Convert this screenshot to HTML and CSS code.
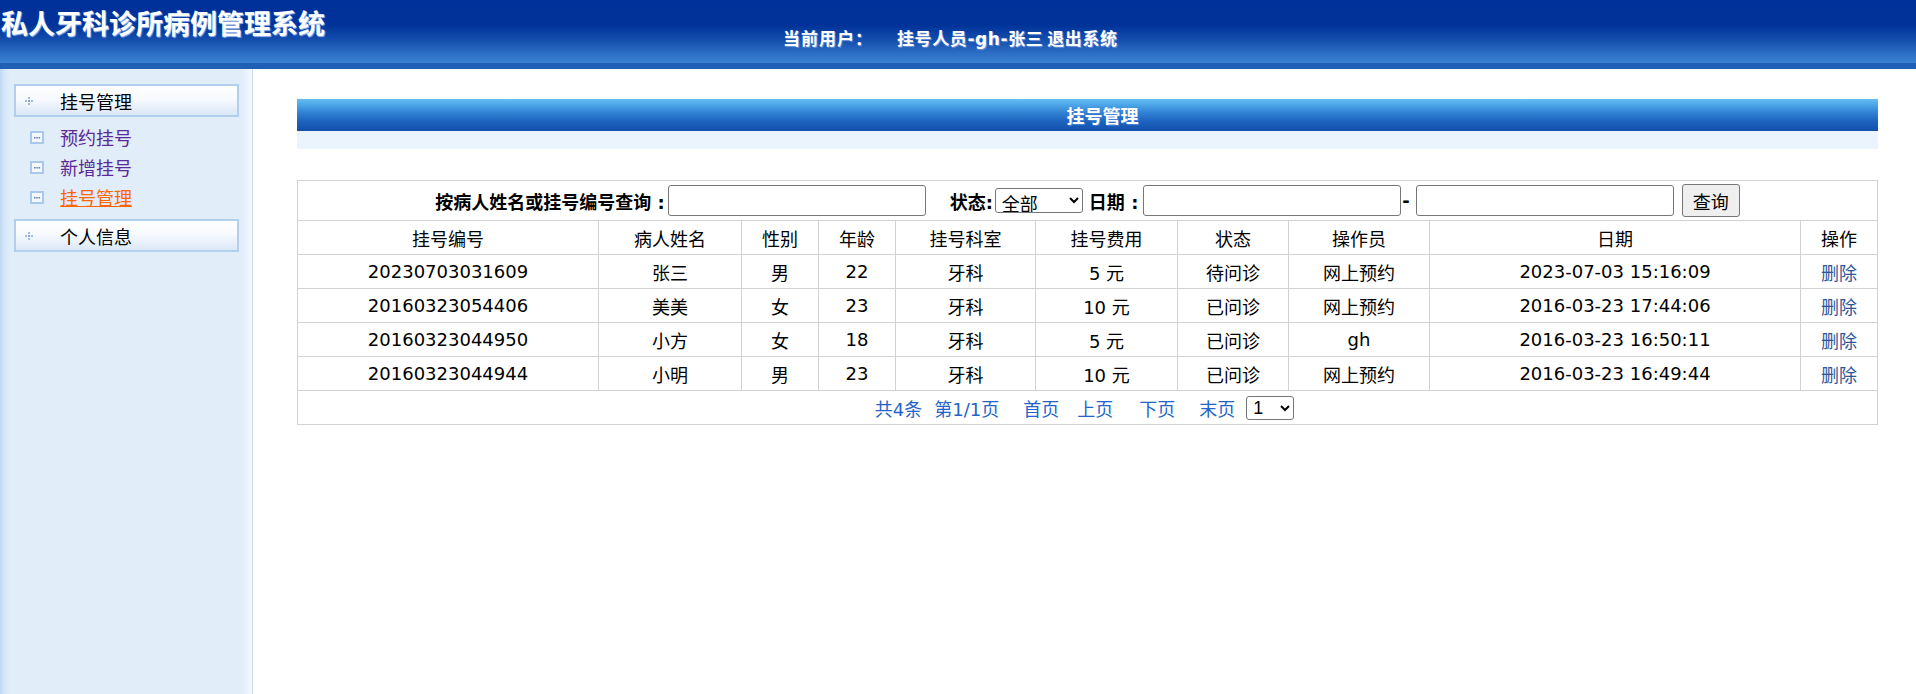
FILE: index.html
```html
<!DOCTYPE html>
<html lang="zh-CN">
<head>
<meta charset="utf-8">
<title>私人牙科诊所病例管理系统</title>
<link rel="stylesheet" href="styles.css">
</head>
<body>
<div class="header">
  <div class="header-main">
    <h1 class="brand">私人牙科诊所病例管理系统</h1>
    <div class="userinfo"><span class="label">当前用户：</span><span class="user">挂号人员-gh-张三</span> <a class="logout" href="#">退出系统</a></div>
  </div>
  <div class="header-band"></div>
</div>
<div class="layout">
  <aside class="sidebar">
    <div class="menu-head">
      <svg class="plus" width="8" height="8" viewBox="0 0 8 8"><rect x="3" y="0" width="2" height="2" fill="#9dbde6"/><rect x="0" y="3" width="2" height="2" fill="#9dbde6"/><rect x="3" y="3" width="2" height="2" fill="#7ea8dc"/><rect x="6" y="3" width="2" height="2" fill="#9dbde6"/><rect x="3" y="6" width="2" height="2" fill="#9dbde6"/></svg>
      <span>挂号管理</span>
    </div>
    <ul class="submenu">
      <li><svg class="box" width="14" height="13" viewBox="0 0 14 13"><rect x="1" y="1" width="12" height="11" fill="#f4f8fd" stroke="#a9c8ec" stroke-width="2"/><rect x="4" y="6" width="1.5" height="1.5" fill="#5a7fb5"/><rect x="6.3" y="6" width="1.5" height="1.5" fill="#5a7fb5"/><rect x="8.6" y="6" width="1.5" height="1.5" fill="#5a7fb5"/></svg><a class="link visited" href="#">预约挂号</a></li>
      <li><svg class="box" width="14" height="13" viewBox="0 0 14 13"><rect x="1" y="1" width="12" height="11" fill="#f4f8fd" stroke="#a9c8ec" stroke-width="2"/><rect x="4" y="6" width="1.5" height="1.5" fill="#5a7fb5"/><rect x="6.3" y="6" width="1.5" height="1.5" fill="#5a7fb5"/><rect x="8.6" y="6" width="1.5" height="1.5" fill="#5a7fb5"/></svg><a class="link visited" href="#">新增挂号</a></li>
      <li><svg class="box" width="14" height="13" viewBox="0 0 14 13"><rect x="1" y="1" width="12" height="11" fill="#f4f8fd" stroke="#a9c8ec" stroke-width="2"/><rect x="4" y="6" width="1.5" height="1.5" fill="#5a7fb5"/><rect x="6.3" y="6" width="1.5" height="1.5" fill="#5a7fb5"/><rect x="8.6" y="6" width="1.5" height="1.5" fill="#5a7fb5"/></svg><a class="link active" href="#">挂号管理</a></li>
    </ul>
    <div class="menu-head">
      <svg class="plus" width="8" height="8" viewBox="0 0 8 8"><rect x="3" y="0" width="2" height="2" fill="#9dbde6"/><rect x="0" y="3" width="2" height="2" fill="#9dbde6"/><rect x="3" y="3" width="2" height="2" fill="#7ea8dc"/><rect x="6" y="3" width="2" height="2" fill="#9dbde6"/><rect x="3" y="6" width="2" height="2" fill="#9dbde6"/></svg>
      <span>个人信息</span>
    </div>
  </aside>
  <main class="main">
    <div class="panel-title">挂号管理</div>
    <div class="panel-sub"></div>
    <table class="grid">
      <colgroup>
        <col class="c-no"><col class="c-name"><col class="c-sex"><col class="c-age"><col class="c-dept"><col class="c-fee"><col class="c-state"><col class="c-op"><col class="c-date"><col class="c-act">
      </colgroup>
      <thead>
        <tr class="search-row">
          <td colspan="10">
            <form class="search">
              <label class="lbl lbl-key">按病人姓名或挂号编号查询 :</label><input class="txt" type="text"><label class="lbl lbl-state">状态:</label><select class="sel"><option>全部</option><option>待问诊</option><option>已问诊</option></select><label class="lbl lbl-date">日期 :</label><input class="txt" type="text"><span class="dash">-</span><input class="txt" type="text"><button class="btn" type="button">查询</button>
            </form>
          </td>
        </tr>
        <tr class="head-row">
          <th>挂号编号</th>
          <th>病人姓名</th>
          <th>性别</th>
          <th>年龄</th>
          <th>挂号科室</th>
          <th>挂号费用</th>
          <th>状态</th>
          <th>操作员</th>
          <th>日期</th>
          <th>操作</th>
        </tr>
      </thead>
      <tbody>
        <tr><td>20230703031609</td><td>张三</td><td>男</td><td>22</td><td>牙科</td><td>5 元</td><td>待问诊</td><td>网上预约</td><td>2023-07-03 15:16:09</td><td><a class="del" href="#">删除</a></td></tr>
        <tr><td>20160323054406</td><td>美美</td><td>女</td><td>23</td><td>牙科</td><td>10 元</td><td>已问诊</td><td>网上预约</td><td>2016-03-23 17:44:06</td><td><a class="del" href="#">删除</a></td></tr>
        <tr><td>20160323044950</td><td>小方</td><td>女</td><td>18</td><td>牙科</td><td>5 元</td><td>已问诊</td><td>gh</td><td>2016-03-23 16:50:11</td><td><a class="del" href="#">删除</a></td></tr>
        <tr><td>20160323044944</td><td>小明</td><td>男</td><td>23</td><td>牙科</td><td>10 元</td><td>已问诊</td><td>网上预约</td><td>2016-03-23 16:49:44</td><td><a class="del" href="#">删除</a></td></tr>
        <tr class="pager-row">
          <td colspan="10">
            <div class="pager">
              <span class="pg">共4条</span><span class="pg">第1/1页</span><a class="pg pg-first" href="#">首页</a><a class="pg" href="#">上页</a><a class="pg pg-next" href="#">下页</a><a class="pg pg-last" href="#">末页</a><select class="pg-sel"><option>1</option></select>
            </div>
          </td>
        </tr>
      </tbody>
    </table>
  </main>
</div>
</body>
</html>
```
FILE: styles.css
```css
* { box-sizing: border-box; }
html, body { margin: 0; padding: 0; }
body {
  font-family: "DejaVu Sans", "Noto Sans CJK SC", sans-serif;
  font-size: 18px;
  color: #000;
  background: #fff;
}

/* Header */
.header-main {
  height: 63px;
  display: grid;
  grid-template-columns: 783px 1fr;
  background: linear-gradient(to bottom, #00309a 0%, #003399 40%, #1650ae 65%, #2d6ec6 85%, #3a82d2 100%);
}
.brand {
  margin: 0;
  padding: 9px 0 0 1px;
  font-family: "Noto Sans CJK SC", sans-serif;
  font-size: 27px;
  line-height: 28px;
  font-weight: 700;
  color: #fff;
  text-shadow: 1px 1px 1px #9fb9ef;
  white-space: nowrap;
}
.userinfo {
  padding-top: 28px;
  font-family: "Noto Sans CJK SC", sans-serif;
  font-size: 17px;
  line-height: 20px;
  font-weight: 700;
  color: #fff;
  white-space: nowrap;
  text-shadow: 1px 1px 1px #6f93d6;
}
.userinfo .label { letter-spacing: 1px; }
.userinfo .user {
  margin-left: 24px;
  font-family: "DejaVu Sans", "Noto Sans CJK SC", sans-serif;
  letter-spacing: 0.6px;
}
.logout { color: #fff; text-decoration: none; letter-spacing: 0.6px; }
.header-band {
  height: 6px;
  background: #1f5fb6;
}

/* Layout */
.layout {
  display: flex;
  min-height: calc(100vh - 69px);
}
.sidebar {
  flex: 0 0 253px;
  background: linear-gradient(to right, #c0d8f2 0px, #d6e6f8 5px, #e1edf9 10px, #e1edf9 242px, #f4f8fd 252px);
  border-right: 1px solid #c6dbf1;
  padding-top: 15px;
}
.menu-head {
  margin-left: 14px;
  width: 225px;
  height: 33px;
  border: 2px solid #b3cfee;
  background: linear-gradient(to bottom, #ffffff 0%, #f7fafe 45%, #dbe8f7 100%);
  display: flex;
  align-items: center;
  font-family: "Noto Sans CJK SC", sans-serif;
  font-size: 18px;
  color: #000;
}
.menu-head .plus { margin-left: 9px; margin-right: 27px; }
.submenu {
  list-style: none;
  margin: 0;
  padding: 5px 0 7px 30px;
}
.submenu li {
  height: 30px;
  display: flex;
  align-items: center;
}
.submenu .box { margin-right: 16px; }
.link {
  font-family: "Noto Sans CJK SC", sans-serif;
  font-size: 18px;
  text-decoration: none;
}
.link.visited { color: #5a2a98; }
.link.active { color: #ff6600; text-decoration: underline; }

/* Main */
.main {
  flex: 1;
  padding: 30px 39px 0 44px;
}
.panel-title {
  height: 32px;
  line-height: 32px;
  padding-left: 30px;
  text-align: center;
  font-family: "Noto Sans CJK SC", sans-serif;
  font-weight: 700;
  font-size: 18px;
  color: #fff;
  text-shadow: 1px 1px 1px #4c86d4;
  background: linear-gradient(to bottom, #66bdf3 0%, #4aa3e6 20%, #2f7fd2 45%, #1e63bf 70%, #1150ab 100%);
}
.panel-sub {
  height: 18px;
  background: #ebf3fc;
}

.grid {
  margin-top: 31px;
  width: 100%;
  table-layout: fixed;
  border-collapse: collapse;
  border: 1px solid #cdcdcd;
}
.grid th, .grid td {
  border: 1px solid #d2d2d2;
  padding: 0;
  height: 34px;
  text-align: center;
  font-weight: 400;
  font-size: 18px;
  white-space: nowrap;
}
.c-no { width: 301px; }
.c-name { width: 143px; }
.c-sex { width: 77px; }
.c-age { width: 77px; }
.c-dept { width: 140px; }
.c-fee { width: 142px; }
.c-state { width: 111px; }
.c-op { width: 141px; }
.c-date { width: 371px; }
.c-act { width: 77px; }

.grid .search-row td { height: 40px; }
.search {
  margin: 0;
  display: flex;
  justify-content: center;
  align-items: center;
}
.lbl {
  font-weight: 700;
  font-size: 18px;
  font-family: "DejaVu Sans", "Noto Sans CJK SC", sans-serif;
}
.lbl-key { margin-right: 3px; }
.lbl-state { margin-left: 24px; margin-right: 2px; }
.lbl-date { margin-left: 6px; margin-right: 5px; }
.txt {
  width: 258px;
  height: 31px;
  border: 1px solid #767676;
  border-radius: 3px;
  background: #fff;
  margin: 0;
}
.sel {
  width: 88px;
  height: 25px;
  border: 1px solid #767676;
  border-radius: 3px;
  font-family: "Noto Sans CJK SC", sans-serif;
  font-size: 18px;
  padding: 0 2px;
  background: #fff;
  color: #000;
}
.dash { font-weight: 700; margin: 0 6px 0 1px; }
.btn {
  margin-left: 8px;
  width: 58px;
  height: 33px;
  border: 1px solid #767676;
  border-radius: 3px;
  background: #efefef;
  font-family: "Noto Sans CJK SC", sans-serif;
  font-size: 18px;
  color: #000;
  padding: 0;
}

.del {
  color: #2f5596;
  text-decoration: none;
  font-family: "Noto Sans CJK SC", sans-serif;
}

.pager {
  display: flex;
  justify-content: center;
  align-items: center;
  padding-right: 6px;
}
.pg {
  color: #2464c8;
  text-decoration: none;
  font-size: 18px;
  margin-right: 12px;
}
.pg-first { margin-left: 12px; margin-right: 18px; }
.pg-next { margin-left: 14px; margin-right: 24px; }
.pg-last { margin-right: 11px; }
.pg-sel {
  width: 48px;
  height: 24px;
  border: 1px solid #767676;
  border-radius: 3px;
  font-size: 18px;
  background: #fff;
  color: #000;
  padding: 0 2px;
}
```
